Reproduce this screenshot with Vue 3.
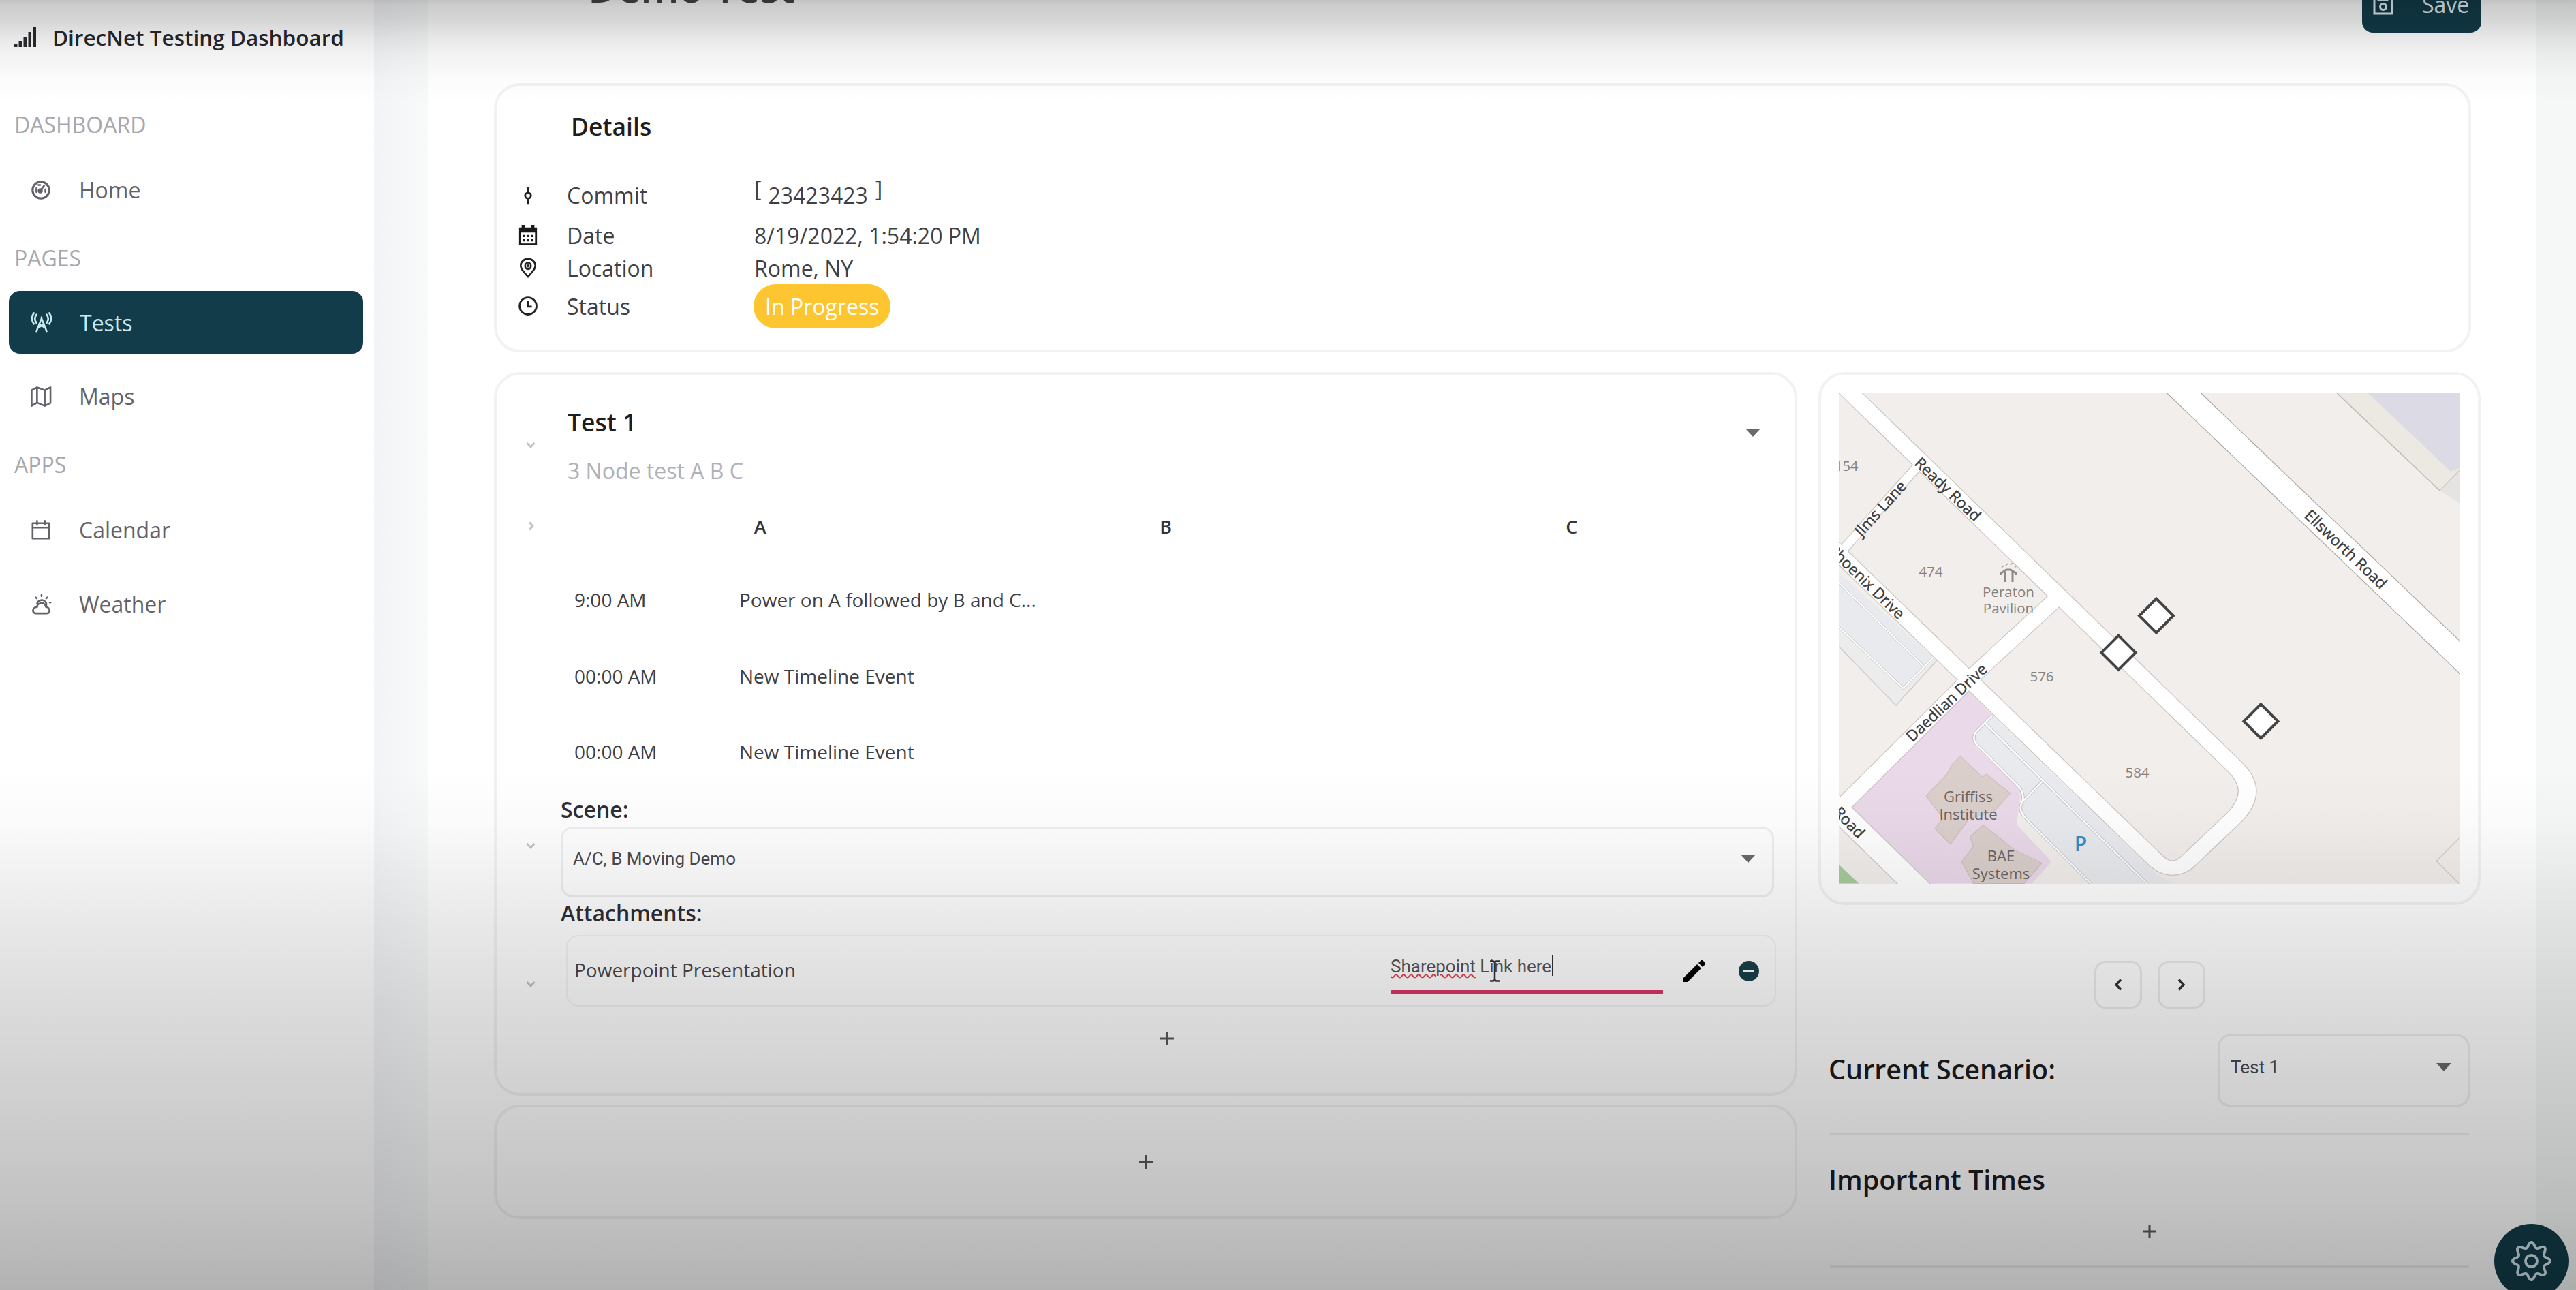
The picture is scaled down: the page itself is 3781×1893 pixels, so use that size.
<script setup>
const sections = [
  { label: 'DASHBOARD', cls: 'first', items: [{ icon: 'gauge', text: 'Home' }] },
  { label: 'PAGES', cls: 'second', items: [{ icon: 'tower', text: 'Tests', active: true }, { icon: 'map', text: 'Maps' }] },
  { label: 'APPS', cls: 'third', items: [{ icon: 'calendar', text: 'Calendar' }, { icon: 'weather', text: 'Weather' }] },
]
const events = [
  { time: '9:00 AM', text: 'Power on A followed by B and C...' },
  { time: '00:00 AM', text: 'New Timeline Event' },
  { time: '00:00 AM', text: 'New Timeline Event' },
]
const nodes = ['A', 'B', 'C']
const markers = [[466, 326.5], [410.5, 380.7], [619.4, 481.4]]
</script>

<template>
  <div class="app">
    <aside class="sidebar">
      <div class="brand">
        <svg class="brand-icon" viewBox="0 0 32 32" fill="#2b2b30">
          <rect x="0" y="26" width="4.500" height="5" /><rect x="6.500" y="22" width="4.500" height="9" /><rect x="13.500" y="16" width="4.500" height="15" /><rect x="20.500" y="9" width="4.500" height="22" /><rect x="27.500" y="1" width="4.500" height="30" />
        </svg>
        <span>DirecNet Testing Dashboard</span>
      </div>
      <section v-for="s in sections" :key="s.label" :class="s.cls">
        <div class="nav-label">{{ s.label }}</div>
        <div v-for="i in s.items" :key="i.text" class="nav-item" :class="{ active: i.active }">
          <svg class="nav-icon" viewBox="0 0 32 32" fill="none" stroke="currentColor" stroke-width="2.8" stroke-linecap="round" stroke-linejoin="round">
            <template v-if="i.icon === 'gauge'"><circle cx="16" cy="16" r="13" stroke-width="3.400" /><circle cx="15" cy="17" r="2.600" fill="currentColor" /><path d="M16 16l5-7M9 19v-6M23 19v-4M12 8h3" /></template>
            <template v-else-if="i.icon === 'tower'"><path d="M8 30L16 10l8 20M11 24l9-5M21 24l-9-5M16 10v-2M8 4c-3 4-3 9 0 13M24 4c3 4 3 9 0 13M4 1.500c-4 5-4 12 0 17M28 1.500c4 5 4 12 0 17" /></template>
            <template v-else-if="i.icon === 'map'"><path d="M1.500 6L10 1.500v24L1.500 30.500zM10 1.500L22 6v24.500L10 25.500M22 6l9-4.500V26l-9 4.500" /></template>
            <template v-else-if="i.icon === 'calendar'"><path d="M3 5h26v24H3zM3 12h26M10 1.500V7M22 1.500V7" /></template>
            <template v-else><path d="M7 30h18c4 0 6-5 3-8-1-2-3-2-4-2-1-5-5-7-9-6-3 1-5 3-5 6-6 0-9 7-3 10zM10 15c1-5 8-8 12-4 3 2 3 5 2 8M17 1v2M8 5l1.500 1.500M26 5l-1.500 1.500M31 13h-1" /></template>
          </svg>
          <span>{{ i.text }}</span>
        </div>
      </section>
    </aside>

    <main class="panel">
      <header class="page-head">
        <h1>Demo Test</h1>
        <button class="save">
          <svg viewBox="0 0 30 32" fill="none" stroke="currentColor" stroke-width="3"><path d="M2 2h21l5 6v22H2zM8 2v8h13V2" /><circle cx="15" cy="20" r="4.500" /></svg>
          <span>Save</span>
        </button>
      </header>

      <section class="card details">
        <h2>Details</h2>
        <div class="row commit">
          <svg class="d-icon" viewBox="0 0 32 32" fill="none" stroke="#222" stroke-width="3"><circle cx="16" cy="16" r="4.500" /><path d="M16 2v9M16 21v9" /></svg>
          <span class="key">Commit</span>
          <span class="val"><i>[</i><span class="hash">23423423</span><i>]</i></span>
        </div>
        <div class="row date">
          <svg class="d-icon" viewBox="0 0 32 34"><path d="M2 5h4V1h5v4h10V1h5v4h4v28H2z" fill="#1a1a1a" /><path d="M5 13h22v17H5z" fill="#fff" /><path d="M8 18.500h16M8 25h16" stroke="#1a1a1a" stroke-width="3.500" stroke-dasharray="3.500 2.700" /></svg>
          <span class="key">Date</span><span class="val">8/19/2022, 1:54:20 PM</span>
        </div>
        <div class="row loc">
          <svg class="d-icon" viewBox="0 0 32 32" fill="none" stroke="#222" stroke-width="2.800"><path d="M16 30C9 22 4.500 18 4.500 12.500a11.500 10.500 0 0 1 23 0c0 5.500-4.500 9.500-11.500 17.500z" /><ellipse cx="16" cy="13" rx="4.500" ry="5" /><circle cx="16" cy="13" r="1" /></svg>
          <span class="key">Location</span><span class="val">Rome, NY</span>
        </div>
        <div class="row stat">
          <svg class="d-icon" viewBox="0 0 32 32" fill="none" stroke="#222" stroke-width="3"><circle cx="16" cy="16" r="13.300" /><path d="M16 8v9h6" /></svg>
          <span class="key">Status</span><span class="badge">In Progress</span>
        </div>
      </section>

      <div class="columns">
        <div class="tests-col">
          <section class="card test">
            <div class="block">
              <svg class="chev" viewBox="0 0 14 10"><path d="M1.500 2l5.500 6 5.500-6" /></svg>
              <div class="body head">
                <div>
                  <h3>Test 1</h3>
                  <p>3 Node test A B C</p>
                </div>
                <span class="caret"></span>
              </div>
            </div>
            <div class="block">
              <svg class="chev fold" viewBox="0 0 14 14"><path d="M5 1.500l5 5.500-5 5.500" /></svg>
              <div class="body nodes"><b v-for="n in nodes" :key="n">{{ n }}</b></div>
            </div>
            <div class="events">
              <div v-for="(e, k) in events" :key="k" class="event"><span>{{ e.time }}</span><span>{{ e.text }}</span></div>
            </div>
            <div class="block">
              <svg class="chev" viewBox="0 0 14 10"><path d="M1.500 2l5.500 6 5.500-6" /></svg>
              <div class="body">
                <h4 class="scene-label">Scene:</h4>
                <div class="select"><span>A/C, B Moving Demo</span><span class="caret"></span></div>
              </div>
            </div>
            <div class="block">
              <svg class="chev" viewBox="0 0 14 10"><path d="M1.500 2l5.500 6 5.500-6" /></svg>
              <div class="body">
                <h4 class="att-label">Attachments:</h4>
                <div class="attachment">
                  <span class="att-name">Powerpoint Presentation</span>
                  <div class="link">
                    <span><span class="typo">Sharepoint</span> Link here</span><i class="text-caret"></i>
                    <svg class="ibeam" viewBox="0 0 16 32" fill="none" stroke="#333" stroke-width="2.500"><path d="M1 1.500h4q3 0 3 3 0-3 3-3h4M8 4v24M1 30.500h4q3 0 3-3 0 3 3 3h4" /></svg>
                  </div>
                  <svg class="pencil" viewBox="0 0 32 32"><path d="M0 26L20 6l6 6L6 32H0z" fill="#000" /><path d="M22 4l4-4h2l4 4v2l-4 4z" fill="#000" /></svg>
                  <svg class="minus" viewBox="0 0 30 30"><circle cx="15" cy="15" r="15" fill="#19404a" /><rect x="7" y="13.500" width="16" height="3" fill="#fff" /></svg>
                </div>
                <div class="add-row"><svg class="plus" viewBox="0 0 20 20"><path d="M10 0v20M0 10h20" /></svg></div>
              </div>
            </div>
          </section>
          <section class="card add-card"><svg class="plus" viewBox="0 0 20 20"><path d="M10 0v20M0 10h20" /></svg></section>
        </div>

        <div class="side-col">
          <section class="card map-card">
            <svg class="map" viewBox="0 0 912 720">
              <rect width="912" height="720" fill="#f2eeeb" />
              <g transform="scale(0.65062 0.51653) translate(-91 -91)">
                <path d="M1215 91h278v310l-45-35z" fill="#ece8e2" />
                <path d="M1285 91h208v212l-22 10z" fill="#dcdae5" />
                <path d="M1215 91l232 277 46-60" fill="none" stroke="#bdb8b4" stroke-width="2.500" />
                <path d="M1447 368l46-58v95z" fill="#e6e4e2" />
                <path d="M91 600l221 250-92 128L91 810z" fill="#edeced" />
                <path d="M91 600l210 240-62 97L91 762z" fill="#e8eaed" />
                <path d="M91 810l129 168 92-128" fill="none" stroke="#d0cccb" stroke-width="2.500" />
                <path d="M91 755l145 174 68-87M91 630l190 235" fill="none" stroke="#c9c9cc" stroke-width="6" />
                <path d="M91 755l145 174 68-87M91 630l190 235" fill="none" stroke="#fff" stroke-width="3.500" />
                <path d="M380 935l58 70-40 60v28l104 124-10 99 79 106-44 62H297L115 1272z" fill="#ead9e9" />
                <path d="M437 1007L810 1460l38 24H659L516 1303q-22-25-11-51 5-20-5-39L397 1084v-26z" fill="#e8eaed" />
                <g fill="none" stroke="#c4c2c8" stroke-width="7">
                  <path d="M437 1007l-38 48q-6 14 0 30l101 128q10 22 5 39-12 24 11 51l143 181M421 1029l365 455M550 1194l-45 58" />
                </g>
                <g fill="none" stroke="#fff" stroke-width="4">
                  <path d="M437 1007l-38 48q-6 14 0 30l101 128q10 22 5 39-12 24 11 51l143 181M421 1029l365 455M550 1194l-45 58" />
                </g>
                <path d="M365 1122l50 60 9-9 54 55-38 52-55 20-42 72-35-44 18-30-38-63 47-62 12-28z" fill="#dacfcb" stroke="#cdbfbd" stroke-width="2" />
                <path d="M417 1318l70 70 62 38-40 58H395l-27-62 27-44-8-27z" fill="#dacfcb" stroke="#cdbfbd" stroke-width="2" />
                <path d="M91 1430l45 54H91z" fill="#a8cb9c" />
                <path d="M1493 1352l-54 68 54 68" fill="none" stroke="#d8cec8" stroke-width="2.500" />
                <g fill="none" stroke="#c8c3c1" stroke-linejoin="round">
                  <path d="M268 300L90 550" stroke-width="25" />
                  <path d="M77 41L980 1147C1022 1196 1022 1240 988 1290L875 1425Q842 1456 809 1422L60 509" stroke-width="43" />
                  <path d="M588 668L395 892L85 1280" stroke-width="42" />
                  <path d="M50 1226L300 1534" stroke-width="59" />
                  <path d="M820 31L1543 903" stroke-width="61" stroke="#aaa6a4" />
                </g>
                <g fill="none" stroke="#fff" stroke-linejoin="round">
                  <path d="M268 300L90 550" stroke-width="21" />
                  <path d="M77 41L980 1147C1022 1196 1022 1240 988 1290L875 1425Q842 1456 809 1422L60 509" stroke-width="39" />
                  <path d="M588 668L395 892L85 1280" stroke-width="38" />
                  <path d="M50 1226L300 1534" stroke-width="55" />
                  <path d="M820 31L1543 903" stroke-width="57" />
                </g>
              </g>
              <g fill="none" stroke="#8f8a88" stroke-width="3">
                <path d="M238 267v-3l8-5h6l8 5v3M244 262v15M255 262v15" />
                <path d="M239 256l3-3M245 253l3-3M252 252l3-3M258 256l3-3" stroke-width="1.500" opacity=".7" />
              </g>
              <g class="place" text-anchor="middle">
                <text x="11" y="114">154</text><text x="135" y="269">474</text><text x="298" y="423">576</text><text x="438" y="564">584</text>
                <text x="249" y="299">Peraton</text><text x="249" y="323">Pavilion</text>
                <g class="building"><text x="190" y="600">Griffiss</text><text x="190" y="626">Institute</text><text x="238" y="687">BAE</text><text x="238" y="713">Systems</text></g>
              </g>
              <text class="parking" x="355" y="672" text-anchor="middle">P</text>
              <g class="street" text-anchor="middle">
                <text transform="translate(160 141) rotate(43.500)" y="8">Ready Road</text>
                <text transform="translate(744 229) rotate(43.500)" y="8">Ellsworth Road</text>
                <text transform="translate(61 169) rotate(-48)" y="8">Jlms Lane</text>
                <text transform="translate(158 454) rotate(-43.500)" y="8">Daedlian Drive</text>
                <text transform="translate(93 327) rotate(44)" y="8" text-anchor="end">Phoenix Drive</text>
                <text transform="translate(34 649) rotate(46)" y="8" text-anchor="end">Road</text>
              </g>
              <path v-for="m in markers" :key="m[0]" :d="`M${m[0]} ${m[1] - 25}l25 25-25 25-25-25z`" fill="#fff" stroke="#444" stroke-width="4" />
            </svg>
          </section>
          <div class="pager">
            <button><svg viewBox="0 0 12 18"><path d="M10 1.500L3 9l7 7.500" /></svg></button>
            <button><svg viewBox="0 0 12 18"><path d="M2 1.500L9 9l-7 7.500" /></svg></button>
          </div>
          <div class="scenario">
            <h5>Current Scenario:</h5>
            <div class="select small"><span>Test 1</span><span class="caret"></span></div>
          </div>
          <hr />
          <h5 class="times">Important Times</h5>
          <div class="times-add"><svg class="plus" viewBox="0 0 20 20"><path d="M10 0v20M0 10h20" /></svg></div>
          <hr />
        </div>
      </div>
    </main>

    <button class="fab">
      <svg viewBox="0 0 64 64" fill="none" stroke="#cfe3ea" stroke-width="4" stroke-linejoin="round">
        <path d="M32 3c5 0 4 8 8 9.500S49 7.500 52.500 11 50 20 51.500 24 61 27 61 32s-8 4-9.500 8 5 9 1 12.500S44 50 40 51.500 37 61 32 61s-4-8-8-9.500-9 5-12.500 1S14 44 12.500 40 3 37 3 32s8-4 9.500-8-5-9-1-12.500S20 14 24 12.500 27 3 32 3z" />
        <circle cx="32" cy="32" r="9" />
      </svg>
    </button>
    <div class="shade"></div>
  </div>
</template>

<style>
body { margin: 0; overflow: hidden; }
</style>

<style scoped>
* { box-sizing: border-box; }
h1, h2, h3, h4, h5, p { margin: 0; font-weight: 600; }
button { font: inherit; padding: 0; margin: 0; }
.app {
  position: relative; display: flex; width: 3781px; height: 1893px; overflow: hidden;
  background: linear-gradient(90deg, #f3f4f6 549px, #f6f7f9 590px, #f8f9f9 628px, #f6f8f8 3722px);
  font-family: "Open Sans", "Noto Sans", sans-serif; font-size: 32px; color: #3f3f46;
}
.sidebar { width: 549px; height: 1893px; background: #fff; flex: none; }
.brand { display: flex; align-items: center; height: 108px; padding-left: 21px; font-weight: 600; font-size: 31.500px; color: #26262c; white-space: nowrap; }
.brand-icon { width: 32px; height: 32px; margin-right: 24px; }
.nav-label { height: 46px; line-height: 46px; padding-left: 21px; color: #a7a7ae; }
.first .nav-label { margin: 52px 0 27px; }
.second .nav-label { margin: 31px 0 25px; }
.third .nav-label { margin: 31px 0 27px; }
.nav-item { display: flex; align-items: center; gap: 40px; width: 520px; height: 92px; margin-left: 13px; padding: 0 0 1px 31px; border-radius: 16px; color: #626268; }
.nav-item + .nav-item { margin-top: 17px; }
.nav-item.active { background: #123c49; color: #c9e9f0; padding: 0 0 0 32px; }
.nav-icon { width: 32px; height: 30px; }

.panel { width: 3094px; margin-left: 79px; background: #fff; flex: none; padding-left: 97px; }
.page-head { display: flex; justify-content: space-between; height: 92px; margin-top: -44px; width: 2917px; }
h1 { font-size: 59px; line-height: 51px; padding-left: 138px; color: #45454a; white-space: nowrap; }
.save { display: flex; align-items: center; gap: 42px; align-self: flex-end; width: 175px; height: 84px; padding-left: 16px; border: 0; border-radius: 16px; background: #123c49; color: #e3f0f4; }
.save svg { width: 30px; height: 32px; }
.card { border: 4px solid #f2f2f4; border-radius: 38px; }

.details { width: 2902px; height: 395px; margin-top: 74px; padding: 36px 0 0 31px; }
h2 { font-size: 35.500px; line-height: 46px; padding-left: 78px; color: #1e1e22; margin-bottom: 49px; }
.row { display: flex; align-items: center; height: 54px; }
.row.commit { height: 60px; margin-bottom: 1px; }
.row.loc { height: 42px; }
.row.stat { height: 70px; }
.d-icon { width: 30px; height: 32px; flex: none; }
.key { width: 275px; margin-left: 42px; }
.commit .key, .commit .hash { position: relative; top: -1px; }
.commit .val { display: flex; }
.commit i { font-style: normal; position: relative; top: -11px; }
.hash { margin: 0 11px 0 10px; }
.badge { height: 65px; line-height: 65px; padding: 0 17px; margin-left: -1px; border-radius: 33px; background: #fdc530; color: #fff; white-space: nowrap; }

.columns { display: flex; margin-top: 29px; }
.tests-col { width: 1913px; margin-right: 31px; }
.test { height: 1062px; padding: 20px 29px 0 0; }
.block { display: flex; align-items: center; }
.chev { width: 14px; height: 10px; margin: 0 37px 0 43px; flex: none; fill: none; stroke: #c3c3c7; stroke-width: 2.800; }
.chev.fold { height: 14px; }
.body { width: 1781px; flex: none; }
.head { display: flex; justify-content: space-between; height: 166px; padding: 24px 20px 0 10px; }
h3 { font-size: 35.500px; line-height: 50px; color: #1e1e22; }
.head p { font-weight: 400; line-height: 44px; margin-top: 25px; color: #b0b0b7; }
.caret { width: 22px; height: 12px; background: #6a6a6e; clip-path: polygon(0 0, 100% 0, 50% 100%); }
.head .caret { margin-top: 35px; }
.nodes { display: grid; grid-template-columns: repeat(3, 595.5px); margin-left: -5px; height: 72px; align-items: center; text-align: center; font-size: 27px; }
.nodes b { font-weight: 600; color: #333338; }
.events { margin: 16px 0 6px 94px; }
.event { display: grid; grid-template-columns: 242px 1fr; align-items: center; height: 111.700px; padding-left: 20px; font-size: 28px; }
h4 { font-size: 32px; line-height: 46px; color: #2e2e34; }
.scene-label { height: 48px; }
.select { display: flex; justify-content: space-between; align-items: center; height: 104px; padding: 0 24px 10px 15px; border: 3px solid #eeeef0; border-radius: 18px; font-family: Roboto, "Open Sans", sans-serif; font-size: 26px; color: #4a4a50; }
.att-label { height: 55px; }
.attachment { display: flex; align-items: center; height: 105px; margin: 0 -3px 0 8px; border: 2px solid #f3f3f5; border-radius: 18px; padding-left: 10px; }
.att-name { width: 1198px; font-size: 28px; color: #48484e; margin-top: -3px; }
.link { position: relative; display: flex; width: 400px; height: 59px; margin-top: 9px; border-bottom: 6px solid #d93565; font-family: Roboto, "Open Sans", sans-serif; font-size: 26px; line-height: 36px; color: #55555b; white-space: nowrap; }
.typo { text-decoration: underline wavy #e0404c 1.500px; text-underline-offset: 2px; }
.text-caret { width: 2px; height: 30px; margin: 2px 0 0 1px; background: #333; }
.ibeam { position: absolute; left: 145px; top: 9px; width: 16px; height: 32px; }
.pencil { width: 32px; height: 32px; margin-left: 30px; }
.minus { width: 30px; height: 30px; margin-left: 49px; }
.plus { width: 20px; height: 20px; stroke: #5a5a5e; stroke-width: 3; fill: none; }
.add-row { height: 94px; margin-left: -2px; display: flex; align-items: center; justify-content: center; }
.add-card { height: 168px; margin-top: 13px; display: flex; align-items: center; justify-content: center; }

.side-col { width: 972px; }
.map-card { width: 972px; height: 782px; padding: 27px 0 0 26px; }
.map { display: block; width: 912px; height: 720px; overflow: hidden; }
.place { font-size: 20.500px; fill: #85817f; }
.building { font-size: 22px; fill: #6b6462; }
.parking { font-size: 30px; font-weight: 600; fill: #2f8fcb; }
.street { font-size: 22.500px; fill: #3a3a3c; stroke: #3a3a3c; stroke-width: .4px; font-weight: 500; }
.pager { display: flex; justify-content: center; gap: 23px; width: 939px; margin: 82px 0 0 17px; }
.pager button { width: 70px; height: 70px; border: 3px solid #ebebef; border-radius: 16px; background: transparent; display: flex; align-items: center; justify-content: center; }
.pager svg { width: 12px; height: 18px; fill: none; stroke: #333; stroke-width: 3.400; }
.scenario { display: flex; justify-content: space-between; align-items: center; width: 941px; margin: 38px 0 38px 15px; }
h5 { font-size: 39.500px; line-height: 50px; color: #1c1c20; white-space: nowrap; }
.scenario h5 { margin-top: -4px; }
.select.small { width: 370px; height: 106px; padding-left: 16px; padding-bottom: 10px; }
hr { width: 938px; height: 3px; margin: 0 0 0 17px; border: 0; background: #eeeef1; }
.times { margin: 41px 0 0 15px; }
.times-add { display: flex; align-items: center; justify-content: center; width: 939px; height: 101px; margin-left: 16px; }

.fab { position: absolute; left: 3661px; top: 1796px; width: 109px; height: 109px; border: 0; border-radius: 50%; background: #123c49; display: flex; align-items: center; justify-content: center; }
.fab svg { width: 61px; height: 61px; }
.shade {
  position: absolute; inset: 0; pointer-events: none;
  background:
    linear-gradient(180deg, rgba(0,0,0,.24) 0, rgba(0,0,0,.2) 8px, rgba(0,0,0,.16) 30px, rgba(0,0,0,.1) 52px, rgba(0,0,0,.05) 78px, rgba(0,0,0,.015) 115px, transparent 150px),
    linear-gradient(180deg, transparent 1130px, rgba(0,0,0,.02) 1210px, rgba(0,0,0,.085) 1350px, rgba(0,0,0,.14) 1480px, rgba(0,0,0,.185) 1606px, rgba(0,0,0,.24) 1770px, rgba(0,0,0,.3) 1893px);
}
</style>
